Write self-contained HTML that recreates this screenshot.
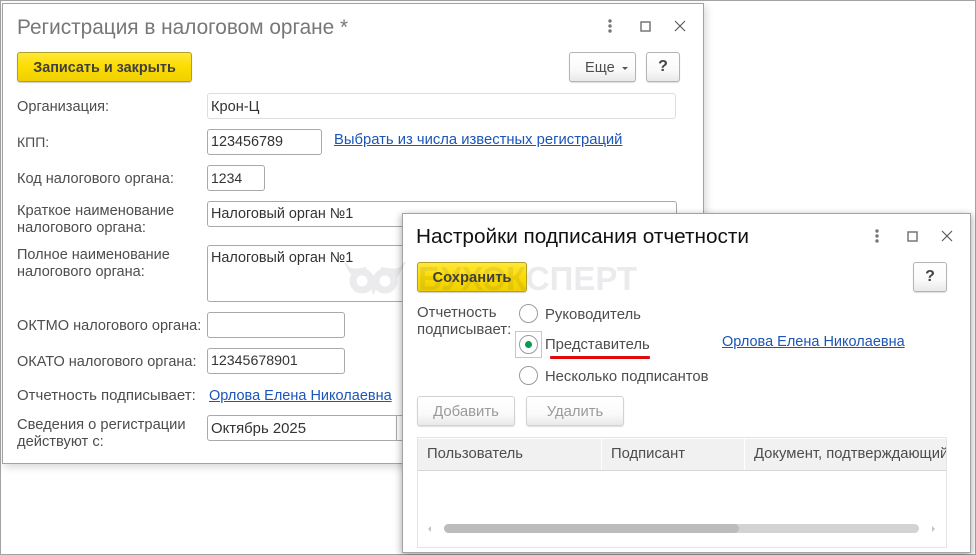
<!DOCTYPE html>
<html lang="ru"><head><meta charset="utf-8"><style>
*{box-sizing:border-box}
html,body{margin:0;padding:0;background:#fff}
body{width:976px;height:555px;position:relative;overflow:hidden;font:14.6px/18px "Liberation Sans",sans-serif;color:#4d4d4d}
.a{position:absolute;white-space:nowrap}
.win{position:absolute;background:#fff;border:1px solid #a3a3a3}
.inp{position:absolute;border:1px solid #a9a9a9;border-radius:3px;background:#fff;color:#333;padding:3px 3px;height:26px;white-space:nowrap;overflow:hidden}
.lnk{position:absolute;color:#1c55b8;text-decoration:underline;white-space:nowrap}
.y{position:absolute;height:30px;border:1px solid #b0a02a;border-radius:3px;background:linear-gradient(#ffe83a,#fcdc00 50%,#f0d000);font-weight:bold;color:#3f3f3f;text-align:center;line-height:31px;box-shadow:0 1px 1px #ccc}
.b{position:absolute;height:30px;border:1px solid #b4b4b4;border-radius:3px;background:linear-gradient(#fff,#fafafa 60%,#e9e9e9);text-align:center;line-height:31px;box-shadow:0 1px 1px #ddd}
.q{line-height:27px;font-weight:bold;font-size:16px;color:#444}
.d{color:#9a9a9a;border-color:#d2d2d2}
.r{position:absolute;width:19px;height:19px;border:1px solid #9b9b9b;border-radius:50%;background:#fff}
.th{position:absolute;top:439px;height:31px;background:#f1f1f1;line-height:30px;padding-left:9px;color:#4d4d4d;white-space:nowrap;overflow:hidden;font-size:14.8px}
svg{position:absolute;overflow:visible}
</style></head><body>
<div class="a" style="left:0;top:0;width:976px;height:555px;border:1px solid #a3a3a3"></div>

<div class="win" style="left:2px;top:3px;width:702px;height:461px;box-shadow:2px 3px 8px rgba(0,0,0,.16)"></div>
<div class="a" style="left:17px;top:16px;font-size:20.8px;line-height:24px;color:#777">Регистрация в налоговом органе *</div>
<div class="y" style="left:17px;top:52px;width:175px;font-size:14.4px">Записать и закрыть</div>
<svg style="left:0;top:0" width="976" height="555">
<g fill="#777"><circle cx="610" cy="21" r="1.7"/><circle cx="610" cy="26" r="1.7"/><circle cx="610" cy="31" r="1.7"/></g>
<rect x="641" y="22" width="9" height="9" fill="none" stroke="#777" stroke-width="1.5"/>
<path d="M675 21L685 31M685 21L675 31" stroke="#555" stroke-width="1.1" fill="none"/>
</svg>
<div class="b" style="left:569px;top:52px;width:67px;text-align:left;padding-left:15px">Еще</div>
<div class="a" style="left:622px;top:67px;width:0;height:0;border:3px solid transparent;border-top-color:#555;border-bottom:0"></div>
<div class="b q" style="left:646px;top:52px;width:34px">?</div>

<div class="a" style="left:17px;top:98px">Организация:</div>
<div class="inp" style="left:207px;top:93px;width:469px;border-color:#ddd;padding-top:4px">Крон-Ц</div>
<div class="a" style="left:17px;top:133px;font-size:14px">КПП:</div>
<div class="inp" style="left:207px;top:129px;width:115px;font-size:14.4px">123456789</div>
<div class="lnk" style="left:334px;top:131px;font-size:14.8px">Выбрать из числа известных регистраций</div>
<div class="a" style="left:17px;top:170px;font-size:14.55px">Код налогового органа:</div>
<div class="inp" style="left:207px;top:165px;width:58px;font-size:14px">1234</div>
<div class="a" style="left:17px;top:203px;line-height:17px;font-size:14.65px">Краткое наименование<br>налогового органа:</div>
<div class="inp" style="left:207px;top:201px;width:470px;font-size:14.4px">Налоговый орган №1</div>
<div class="a" style="left:17px;top:247px;line-height:17px;font-size:14.5px">Полное наименование<br>налогового органа:</div>
<div class="inp" style="left:207px;top:245px;width:470px;height:57px;font-size:14.4px">Налоговый орган №1</div>
<div class="a" style="left:17px;top:317px;font-size:14.55px">ОКТМО налогового органа:</div>
<div class="inp" style="left:207px;top:312px;width:138px"></div>
<div class="a" style="left:17px;top:353px;font-size:14.5px">ОКАТО налогового органа:</div>
<div class="inp" style="left:207px;top:348px;width:138px;font-size:14.2px">12345678901</div>
<div class="a" style="left:17px;top:387px;font-size:15px">Отчетность подписывает:</div>
<div class="lnk" style="left:209px;top:387px;font-size:14.5px">Орлова Елена Николаевна</div>
<div class="a" style="left:17px;top:417px;line-height:17px;font-size:14.7px">Сведения о регистрации<br>действуют с:</div>
<div class="inp" style="left:207px;top:415px;width:300px;font-size:14.9px;padding-top:4px">Октябрь 2025</div>
<div class="a" style="left:396px;top:415px;width:1px;height:26px;background:#a9a9a9"></div>

<div class="win" style="left:402px;top:213px;width:569px;height:340px;box-shadow:-2px 2px 7px rgba(0,0,0,.2),2px 2px 7px rgba(0,0,0,.2)"></div>
<div class="a" style="left:416px;top:225px;font-size:20.75px;line-height:24px;color:#111">Настройки подписания отчетности</div>
<svg style="left:0;top:0" width="976" height="555">
<g fill="#777"><circle cx="877" cy="231" r="1.7"/><circle cx="877" cy="236" r="1.7"/><circle cx="877" cy="241" r="1.7"/></g>
<rect x="908" y="232" width="9" height="9" fill="none" stroke="#777" stroke-width="1.5"/>
<path d="M942 231L952 241M952 231L942 241" stroke="#555" stroke-width="1.1" fill="none"/>
</svg>
<div class="y" style="left:417px;top:262px;width:110px;font-size:14.75px">Сохранить</div>
<div class="b q" style="left:913px;top:262px;width:34px">?</div>
<div class="a" style="left:417px;top:304px;line-height:17px;font-size:14.95px">Отчетность<br>подписывает:</div>
<div class="r" style="left:519px;top:304px"></div>
<div class="a" style="left:545px;top:306px;font-size:14.9px">Руководитель</div>
<div class="a" style="left:515px;top:331px;width:27px;height:27px;border:1px solid #f2c94a"></div>
<div class="r" style="left:519px;top:335px"></div>
<div class="a" style="left:525px;top:341px;width:7px;height:7px;border-radius:50%;background:#0a9a50"></div>
<div class="a" style="left:545px;top:336px;font-size:14.85px">Представитель</div>
<div class="a" style="left:550px;top:356px;width:100px;height:3px;background:#e00a0a;border-radius:1px"></div>
<div class="r" style="left:519px;top:366px"></div>
<div class="a" style="left:545px;top:368px;font-size:14.8px">Несколько подписантов</div>
<div class="lnk" style="left:722px;top:333px;font-size:14.5px">Орлова Елена Николаевна</div>
<div class="b d" style="left:417px;top:396px;width:98px;font-size:14.9px">Добавить</div>
<div class="b d" style="left:526px;top:396px;width:98px;font-size:14.8px">Удалить</div>

<div class="a" style="left:417px;top:437px;width:530px;height:111px;border:1px solid #e4e4e4"></div>
<div class="th" style="left:418px;width:183px">Пользователь</div>
<div class="th" style="left:602px;width:142px">Подписант</div>
<div class="th" style="left:745px;width:201px">Документ, подтверждающий</div>
<div class="a" style="left:418px;top:470px;width:528px;height:1px;background:#d6d6d6"></div>
<div class="a" style="left:444px;top:524px;width:475px;height:9px;border-radius:5px;background:#d3d3d3"></div>
<div class="a" style="left:444px;top:524px;width:295px;height:9px;border-radius:5px;background:#bcbcbc"></div>
<div class="a" style="left:428px;top:526px;width:0;height:0;border:3px solid transparent;border-right-color:#c4c4c4;border-left:0"></div>
<div class="a" style="left:932px;top:526px;width:0;height:0;border:3px solid transparent;border-left-color:#c4c4c4;border-right:0"></div>

<svg style="left:0;top:0;opacity:.1;pointer-events:none" width="976" height="555">
<g fill="none" stroke="#4a4a66" stroke-width="7"><circle cx="362" cy="281" r="9"/><circle cx="385" cy="281" r="9"/></g>
<path d="M345 263C350 272 356 270 366 268L354 278ZM405 262C400 272 394 270 381 268L396 278Z" fill="#4a4a66" stroke="#4a4a66" stroke-width="2"/>
<path d="M369 284L378 284L373.500 295Z" fill="#4a4a66"/>
<text x="418" y="290" font-family="Liberation Sans" font-weight="bold" font-size="33" fill="#4a4a66">БУХЭКСПЕРТ</text>
</svg>
</body></html>
